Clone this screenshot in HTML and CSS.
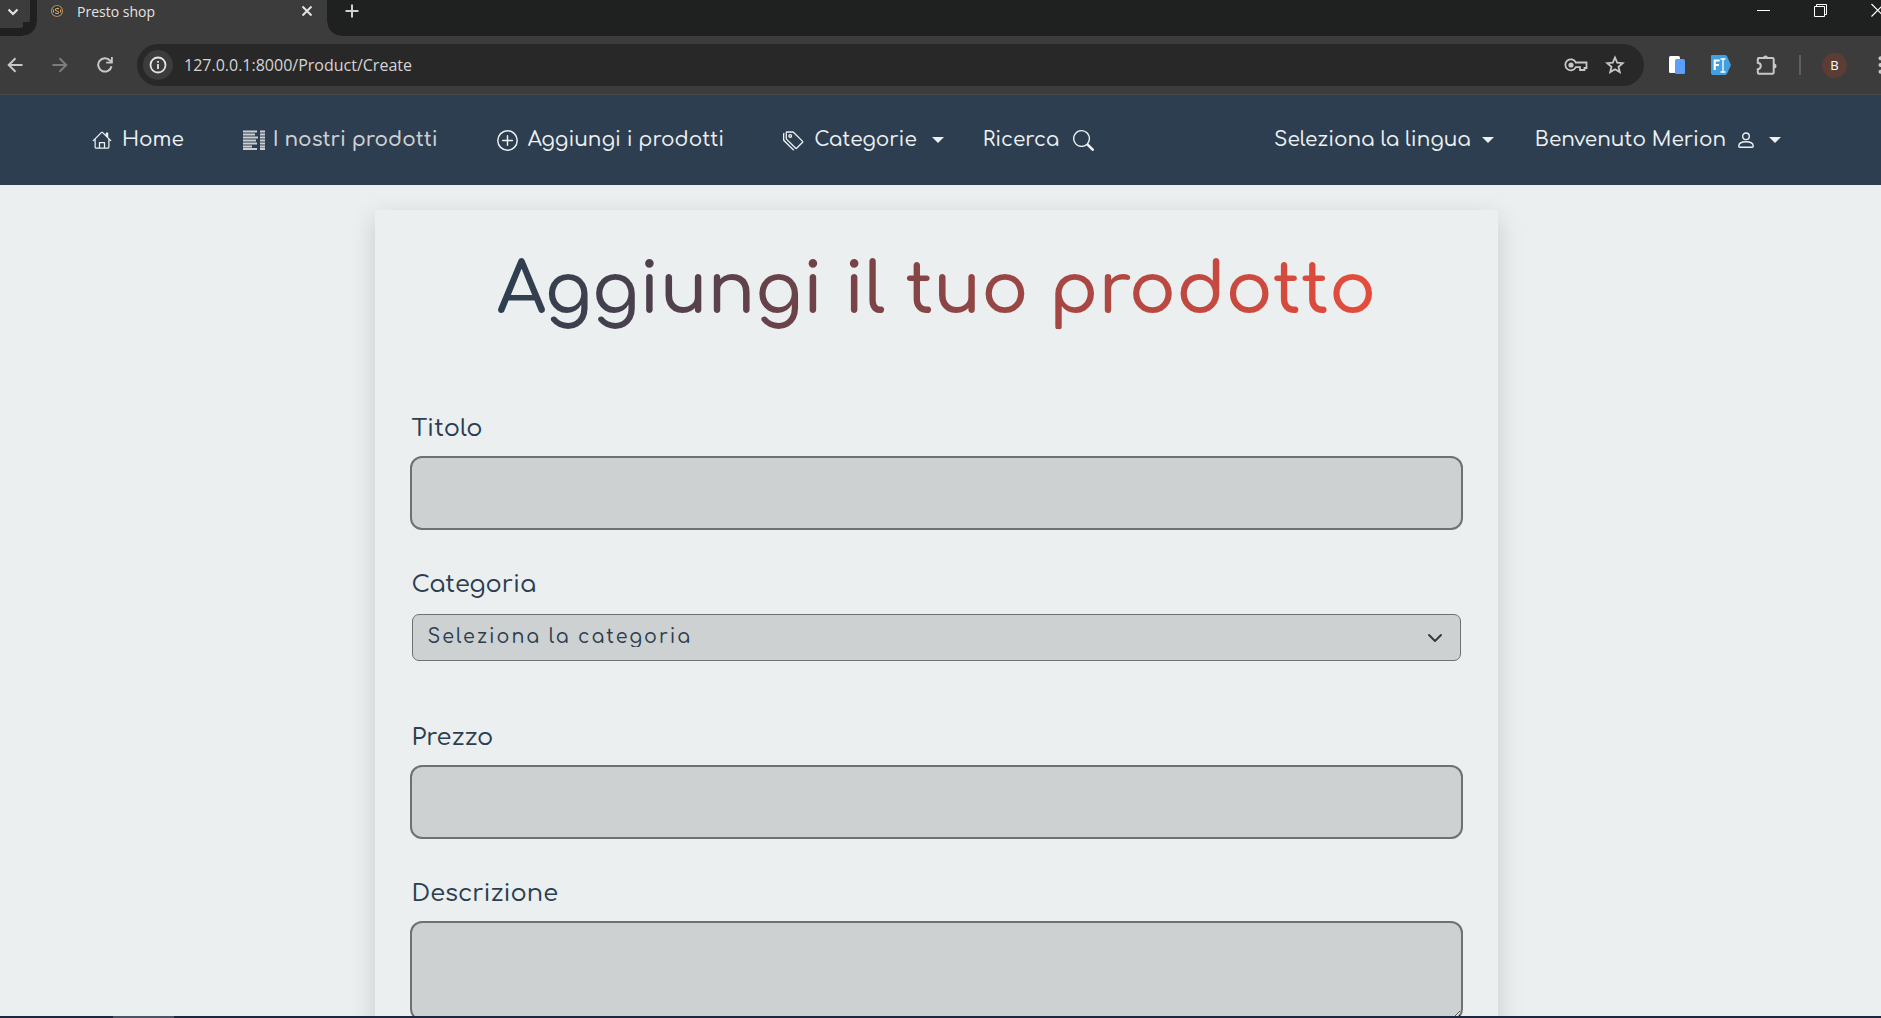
FILE: index.html
```html
<!DOCTYPE html>
<html lang="it">
<head>
<meta charset="utf-8">
<title>Presto shop</title>
<link rel="stylesheet" href="styles.css">
</head>
<body>
<div class="tabstrip">
  <button class="tab-search" aria-label="Cerca schede"><svg width="12" height="8" viewBox="0 0 12 8"><path d="M1.5 1.5 6 6l4.500-4.500" fill="none" stroke="#e3e3e3" stroke-width="2.200"/></svg></button>
  <div class="tab">
    <svg width="14" height="14" viewBox="0 0 14 14"><circle cx="7" cy="7" r="5.500" fill="#28303c" stroke="#b08a62" stroke-width="1.200"/><path d="M9 5.200C8 4 5.300 4.200 5.300 5.700S9 7 8.800 8.500 6 10 5 8.700M3.500 5.500v3M10.600 5.500v3" fill="none" stroke="#d9a54e" stroke-width="1.100"/></svg>
    <span class="tab-title">Presto shop</span>
    <button class="icon-btn" aria-label="Chiudi scheda"><svg width="12" height="12" viewBox="0 0 12 12"><path d="m1.500 1.500 9 9m0-9-9 9" stroke="#e3e3e3" stroke-width="2"/></svg></button>
  </div>
  <button class="icon-btn new-tab" aria-label="Nuova scheda"><svg width="14" height="14" viewBox="0 0 14 14"><path d="M7 .5v13M.5 7h13" stroke="#d0d0d0" stroke-width="2"/></svg></button>
  <div class="window-controls">
    <button class="icon-btn" aria-label="Riduci a icona"><svg width="14" height="14" viewBox="0 0 14 14"><path d="M0 7.500h13" stroke="#fff"/></svg></button>
    <button class="icon-btn" aria-label="Ripristina"><svg width="14" height="14" viewBox="0 0 14 14"><path d="M.5 3.500h10v10H.5zM2.500 3V1.500h10v10h-2" fill="none" stroke="#fff"/></svg></button>
    <button class="icon-btn" aria-label="Chiudi"><svg width="14" height="14" viewBox="0 0 14 14"><path d="m.5 1 12.500 12.500M13 1 .5 13.500" stroke="#fff" stroke-width="1.200"/></svg></button>
  </div>
</div>

<div class="toolbar">
  <div class="history">
    <button class="icon-btn" aria-label="Indietro"><svg width="16" height="16" viewBox="0 0 16 16"><path d="M15.500 8H2M8.500 1.200 1.700 8l6.800 6.800" fill="none" stroke="#c7c7c7" stroke-width="2"/></svg></button>
    <button class="icon-btn" aria-label="Avanti"><svg width="16" height="16" viewBox="0 0 16 16"><path d="M.5 8H14M7.500 1.200 14.300 8l-6.800 6.800" fill="none" stroke="#7c7c7c" stroke-width="2"/></svg></button>
    <button class="icon-btn" aria-label="Ricarica"><svg width="16" height="16" viewBox="0 0 16 16"><path d="M14.500 9.200A6.700 6.700 0 1 1 13 3.500l1.500 1.700" fill="none" stroke="#c7c7c7" stroke-width="2"/><path d="M15.800 0v6.600H9.200V4.800H14V0z" fill="#c7c7c7"/></svg></button>
  </div>
  <div class="omnibox">
    <button class="site-info" aria-label="Informazioni sul sito"><svg width="18" height="18" viewBox="0 0 18 18"><circle cx="9" cy="9" r="7.500" fill="none" stroke="#e3e3e3" stroke-width="1.800"/><path d="M9 8v5M9 5v1.800" stroke="#e3e3e3" stroke-width="1.800"/></svg></button>
    <input class="address" type="text" aria-label="Indirizzo" value="127.0.0.1:8000/Product/Create">
    <button class="icon-btn" aria-label="Password"><svg width="24" height="16" viewBox="0 0 24 16"><path d="M11.800 5.500H22.500v5.500H20.500v2h-4.500v-2.800h-4.200A5.500 5.500 0 1 1 11.800 5.500z" fill="none" stroke="#c7c7c7" stroke-width="1.800"/><circle cx="7" cy="8" r="2.600" fill="#c7c7c7"/></svg></button>
    <button class="icon-btn" aria-label="Preferiti"><svg width="20" height="20" viewBox="0 0 20 20"><path d="m10 2.500 2.200 5.100 5.500.5-4.200 3.600 1.300 5.400L10 14.200l-4.800 2.900 1.300-5.400-4.200-3.600 5.500-.5z" fill="none" stroke="#c7c7c7" stroke-width="1.800"/></svg></button>
  </div>
  <div class="extensions">
    <button class="icon-btn" aria-label="Estensione traduttore"><svg width="18" height="20" viewBox="0 0 18 20"><rect x="1" y="1" width="11" height="17" rx="1.500" fill="#fff"/><path d="M7 5.500Q7 4 8.500 4H15q2 0 2 2v11.500q0 1.500-1.500 1.500h-7Q7 19 7 17.500z" fill="#5b9ff8"/></svg></button>
    <button class="icon-btn" aria-label="Estensione font"><svg width="22" height="22" viewBox="0 0 22 22"><path d="M1.500 1H15q1 0 2 1.200L21 11l-4 8.800q-1 1.200-2 1.200H3q-2 0-2-2V2z" fill="#41a0e0"/><path d="M4.700 16V6.500h5M4.700 11h4.300" fill="none" stroke="#fff" stroke-width="2.200"/><path d="M10.500 5h5M13 5v13M10.500 18h5" stroke="#fff" stroke-width="1.300"/></svg></button>
    <button class="icon-btn" aria-label="Estensioni"><svg width="22" height="22" viewBox="0 0 22 22"><path d="M2 4h14.500q1.200 0 1.200 1.200V18.500q0 1.200-1.200 1.200H3q-1.200 0-1.200-1.200v-3.300q3-.5 3-3.200t-3-3.200V5q0-1 .7-1z" fill="none" stroke="#c7c7c7" stroke-width="2"/><path d="M7 4a2.500 2.500 0 0 1 5 0zM18 9.500a2.500 2.500 0 0 1 0 5z" fill="#c7c7c7"/></svg></button>
    <span class="divider"></span>
    <button class="avatar" aria-label="Profilo">B</button>
    <button class="icon-btn" aria-label="Menu"><svg width="5" height="18" viewBox="0 0 5 18"><circle cx="2.500" cy="2.300" r="2" fill="#c7c7c7"/><circle cx="2.500" cy="9" r="2" fill="#c7c7c7"/><circle cx="2.500" cy="15.700" r="2" fill="#c7c7c7"/></svg></button>
  </div>
</div>

<nav class="navbar">
  <div class="nav-group nav-main">
    <a class="nav-link" href="#"><svg width="20" height="20" viewBox="0 0 16 16" fill="currentColor"><path d="M8.707 1.500a1 1 0 0 0-1.414 0L.646 8.146a.5.5 0 0 0 .708.708L2 8.207V13.500A1.500 1.500 0 0 0 3.500 15h9a1.500 1.500 0 0 0 1.500-1.500V8.207l.646.647a.5.5 0 0 0 .708-.708L13 5.793V2.500a.5.5 0 0 0-.5-.5h-1a.5.5 0 0 0-.5.5v1.293zM13 7.207V13.500a.5.5 0 0 1-.5.5H10.500V10a.5.500 0 0 0-.5-.5H6a.5.500 0 0 0-.5.5v4h-2a.5.500 0 0 1-.5-.5V7.207l5-5zM6.500 14v-3.500h3V14z"/></svg>Home</a>
    <a class="nav-link muted" href="#"><svg width="22" height="20" viewBox="0 0 22 20"><path d="M0 1.500h14M0 4.500h12M0 7.500h15M0 10.500h13M0 13.500h14M0 16.500h9M0 19h14" stroke="currentColor" stroke-width="2.200"/><path d="M17 1.500h5M17 4.500h5M17 7.500h5M17 10.500h5M17 13.500h5M17 16.500h5M17 19h5" stroke="currentColor" stroke-width="1.800"/></svg>I nostri prodotti</a>
    <a class="nav-link" href="#"><svg width="21" height="21" viewBox="0 0 16 16" fill="none" stroke="currentColor"><circle cx="8" cy="8" r="7.400" stroke-width="1.100"/><path d="M8 4.300v7.400M4.300 8h7.400" stroke-width="1.100" stroke-linecap="round"/></svg>Aggiungi i prodotti</a>
    <button class="nav-link" aria-haspopup="true"><svg width="21" height="21" viewBox="0 0 16 16" fill="currentColor"><path d="M3 2v4.586l7 7L14.586 9l-7-7zM2 2a1 1 0 0 1 1-1h4.586a1 1 0 0 1 .707.293l7 7a1 1 0 0 1 0 1.414l-4.586 4.586a1 1 0 0 1-1.414 0l-7-7A1 1 0 0 1 2 6.586z"/><path d="M5.500 5a.5.5 0 1 1 0-1 .5.5 0 0 1 0 1m0 1a1.500 1.500 0 1 0 0-3 1.500 1.500 0 0 0 0 3M1 7.086a1 1 0 0 0 .293.707L8.750 15.250l-.043.043a1 1 0 0 1-1.414 0l-7-7A1 1 0 0 1 0 7.586V3a1 1 0 0 1 1-1z"/></svg>Categorie<span class="caret"></span></button>
    <a class="nav-link search-link" href="#">Ricerca<svg width="21" height="21" viewBox="0 0 16 16" fill="currentColor"><path d="M11.742 10.344a6.500 6.500 0 1 0-1.397 1.398h-.001q.044.060.098.115l3.850 3.850a1 1 0 0 0 1.415-1.414l-3.850-3.850a1 1 0 0 0-.115-.100zM12 6.500a5.500 5.500 0 1 1-11 0 5.500 5.500 0 0 1 11 0"/></svg></a>
  </div>
  <div class="nav-group nav-user">
    <button class="nav-link language" aria-haspopup="true">Seleziona la lingua<span class="caret"></span></button>
    <button class="nav-link" aria-haspopup="true">Benvenuto Merion<svg class="person" width="16" height="16" viewBox="0 0 16 16" fill="none" stroke="currentColor" stroke-width="1.400"><circle cx="8" cy="4.300" r="3.300"/><path d="M.8 14.200c0-3 3-4.400 7.200-4.400s7.200 1.400 7.200 4.400q0 1-1 1H1.800q-1 0-1-1z"/></svg><span class="caret"></span></button>
  </div>
</nav>

<main class="page">
  <form class="card">
    <h1 class="title"><span>Aggiungi il tuo prodotto</span></h1>
    <div class="field">
      <label for="titolo">Titolo</label>
      <input class="control" id="titolo" type="text">
    </div>
    <div class="field field-select">
      <label for="categoria">Categoria</label>
      <div class="select-wrap">
        <select id="categoria"><option>Seleziona la categoria</option></select>
        <svg width="16" height="16" viewBox="0 0 16 16"><path d="m2 5 6 6 6-6" fill="none" stroke="#343a40" stroke-width="2" stroke-linecap="round" stroke-linejoin="round"/></svg>
      </div>
    </div>
    <div class="field">
      <label for="prezzo">Prezzo</label>
      <input class="control" id="prezzo" type="text">
    </div>
    <div class="field">
      <label for="descrizione">Descrizione</label>
      <textarea class="control" id="descrizione"></textarea>
    </div>
  </form>
</main>
<footer class="taskbar"><span class="taskbar-item"></span></footer>
</body>
</html>
```
FILE: styles.css
```css
* { box-sizing: border-box; }

body {
  margin: 0;
  height: 100vh;
  display: flex;
  flex-direction: column;
  overflow: hidden;
  background: #ebeff0;
  color: #2c3e50;
  font-family: Comfortaa, Quicksand, Lato, sans-serif;
  font-weight: 500;
}

button, input, select, textarea { font: inherit; color: inherit; margin: 0; }
button { background: none; border: 0; padding: 0; }
svg { display: block; flex: none; }
.icon-btn { display: flex; }

/* browser tabs */
.tabstrip {
  flex: none;
  display: flex;
  height: 36px;
  background: #1f2120;
  font-family: "Open Sans", sans-serif;
  font-weight: 400;
}
.tab-search {
  width: 30px;
  height: 28px;
  padding: 8px 0 0 7px;
  display: flex;
  align-items: flex-start;
  background: #3c3c3c;
  border-radius: 0 0 10px 0;
}
.tab {
  position: relative;
  width: 290px;
  height: 36px;
  margin-left: 7px;
  padding: 0 14px 14px 13px;
  display: flex;
  align-items: center;
  gap: 13px;
  background: #3c3c3c;
}
.tab::before, .tab::after {
  content: "";
  position: absolute;
  bottom: 0;
  width: 14px;
  height: 14px;
}
.tab::before { right: 100%; background: radial-gradient(circle at 0 0, #1f2120 13px, #3c3c3c 14px); }
.tab::after { left: 100%; background: radial-gradient(circle at 100% 0, #1f2120 13px, #3c3c3c 14px); }
.tab-title { flex: 1; color: #e3e3e3; font-size: 14px; }
.new-tab { padding: 4px 0 0 18px; }
.window-controls { margin-left: auto; margin-right: -4px; display: flex; gap: 43px; padding-top: 3px; }

/* browser toolbar */
.toolbar {
  flex: none;
  display: flex;
  align-items: center;
  height: 59px;
  padding-left: 7px;
  background: #3c3c3c;
  border-bottom: 1px solid #484848;
}
.history { display: flex; gap: 29px; margin-right: 24px; }
.omnibox {
  flex: 1;
  height: 42px;
  padding: 0 19px 0 6px;
  display: flex;
  align-items: center;
  gap: 17px;
  border-radius: 21px;
  background: #282828;
}
.site-info {
  width: 30px;
  height: 30px;
  display: grid;
  place-items: center;
  border-radius: 50%;
  background: #3c3c3c;
}
.address {
  flex: 1;
  min-width: 0;
  margin-left: -6px;
  padding: 0;
  border: 0;
  background: none;
  color: #d4d4d4;
  font-family: "Open Sans", sans-serif;
  font-size: 16px;
  font-weight: 400;
}
.extensions { display: flex; align-items: center; gap: 24px; margin: 0 -2px 0 24px; }
.divider { width: 2px; height: 20px; margin: 0 -3px; background: #5f5f5f; }
.avatar {
  width: 25px;
  height: 25px;
  margin-right: 7px;
  border-radius: 50%;
  background: #5c3d35;
  color: #fff;
  font-family: "Open Sans", sans-serif;
  font-size: 13px;
}

/* site navigation */
.navbar {
  flex: none;
  display: flex;
  justify-content: space-between;
  align-items: center;
  height: 90px;
  padding: 0 100px 0 92px;
  background: #2d3e50;
}
.nav-group { display: flex; }
.nav-main { gap: 59px; }
.nav-user { gap: 41px; }
.nav-link {
  display: flex;
  align-items: center;
  gap: 10px;
  color: #ecf0f1;
  font-size: 20px;
  line-height: 32px;
  text-decoration: none;
  white-space: nowrap;
}
.nav-link.muted { gap: 8px; color: #ccd0d4; font-weight: 600; }
.search-link { gap: 14px; margin-left: -20px; }
.person { margin-left: 2px; }
.caret {
  margin-left: 5px;
  border: 6px solid transparent;
  border-top-color: currentColor;
  border-bottom: 0;
}
.language .caret { margin-left: 1px; }

/* product form */
.page { flex: 1; min-height: 0; overflow: hidden; padding: 25px 8px 0 0; }
.card {
  width: 60%;
  margin: 0 auto;
  padding: 34px 35px 48px;
  background: #ebeff0;
  box-shadow: 0 8px 24px rgba(0, 0, 0, 0.15);
}
.title {
  margin: 0 0 76px;
  text-align: center;
  font-size: 70px;
  font-weight: 600;
  line-height: 92px;
}
.title span {
  background: linear-gradient(to right, #2c3e50, #e74c3c);
  background-clip: text;
  -webkit-background-clip: text;
  color: transparent;
}
.field { display: flex; flex-direction: column; margin-bottom: 38px; }
.field label { margin: 0 0 11px 2px; font-size: 24px; line-height: 33px; }
.control {
  height: 74px;
  padding: 12px 16px;
  border: 2px solid #707072;
  border-radius: 12px;
  background: #cdd1d2;
  font-size: 20px;
}
textarea.control { height: 100px; }
.field-select { margin: 0 2px 60px; }
.field-select label { margin-left: 0; margin-bottom: 13px; }
.select-wrap { display: grid; align-items: center; }
.select-wrap > * { grid-area: 1 / 1; }
.select-wrap svg { justify-self: end; margin-right: 18px; pointer-events: none; }
select {
  appearance: none;
  height: 47px;
  padding: 0 40px 2px 15px;
  border: 1px solid #707072;
  border-radius: 7px;
  background: #cdd1d2;
  font-size: 19px;
  letter-spacing: 2px;
}

.taskbar { flex: none; height: 2px; padding-left: 113px; background: #1d2740; }
.taskbar-item { display: block; width: 61px; height: 2px; background: #4b5365; }
```
